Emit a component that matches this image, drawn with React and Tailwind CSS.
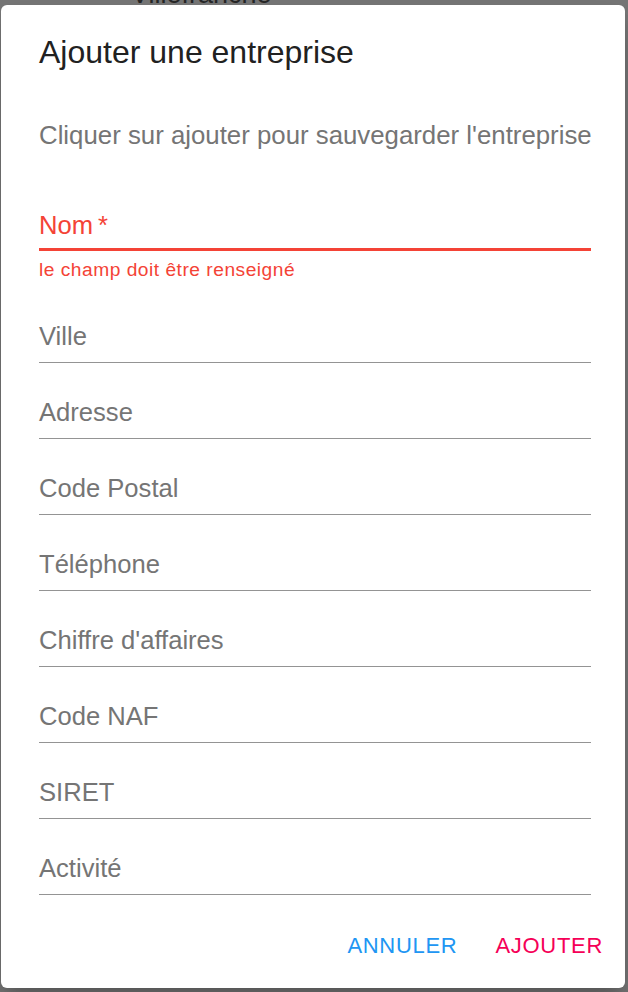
import React from 'react'

const fields = ['Ville', 'Adresse', 'Code Postal', 'Téléphone', "Chiffre d'affaires", 'Code NAF', 'SIRET', 'Activité']

function Field({ label }) {
  return (
    <div className="h-[76px]">
      <div className="h-[30px] leading-[30px] text-[25.6px] text-[#757575]">{label}</div>
      <div className="mt-[11px] h-px bg-[#949494]" />
    </div>
  )
}

export default function App() {
  return (
    <div className="relative w-[628px] h-[992px] overflow-hidden bg-[#767676] font-['Liberation_Sans',Arial,sans-serif]">
      {/* page content behind the overlay */}
      <span className="absolute left-[131px] top-[-21px] text-[27px] leading-[30px] text-[#262626]">Villefranche</span>

      <div className="relative ml-[1px] mt-[5px] w-[624px] h-[983px] bg-white rounded-[6px] shadow-[0_11px_15px_-7px_rgba(0,0,0,0.2),0_24px_38px_3px_rgba(0,0,0,0.14)] pl-[38px] pr-[34px] pt-[28px]">
        <h2 className="h-[38px] leading-[38px] text-[32px] text-[#212121]">Ajouter une entreprise</h2>

        <p className="mt-[49px] h-[30px] leading-[30px] text-[25.8px] text-[#757575] whitespace-nowrap">
          Cliquer sur ajouter pour sauvegarder l'entreprise
        </p>

        <div className="mt-[60px]">
          <div className="h-[30px] leading-[30px] text-[25.6px] text-[#f44336]">
            Nom<span className="ml-[5px]">*</span>
          </div>
          <div className="mt-[8px] h-[3px] bg-[#f44336]" />
          <div className="mt-[8px] h-[22px] leading-[22px] text-[19.2px] tracking-[0.5px] text-[#f44336]">
            le champ doit être renseigné
          </div>
        </div>

        <div className="mt-[40px]">
          {fields.map(f => <Field key={f} label={f} />)}
        </div>

        <div className="mt-[4px] flex justify-end gap-[38px] -mr-[12px] text-[22px] leading-[26px] tracking-[0.7px] font-medium">
          <button className="uppercase text-[#2196f3]">ANNULER</button>
          <button className="uppercase text-[#f50057]">AJOUTER</button>
        </div>
      </div>
    </div>
  )
}
